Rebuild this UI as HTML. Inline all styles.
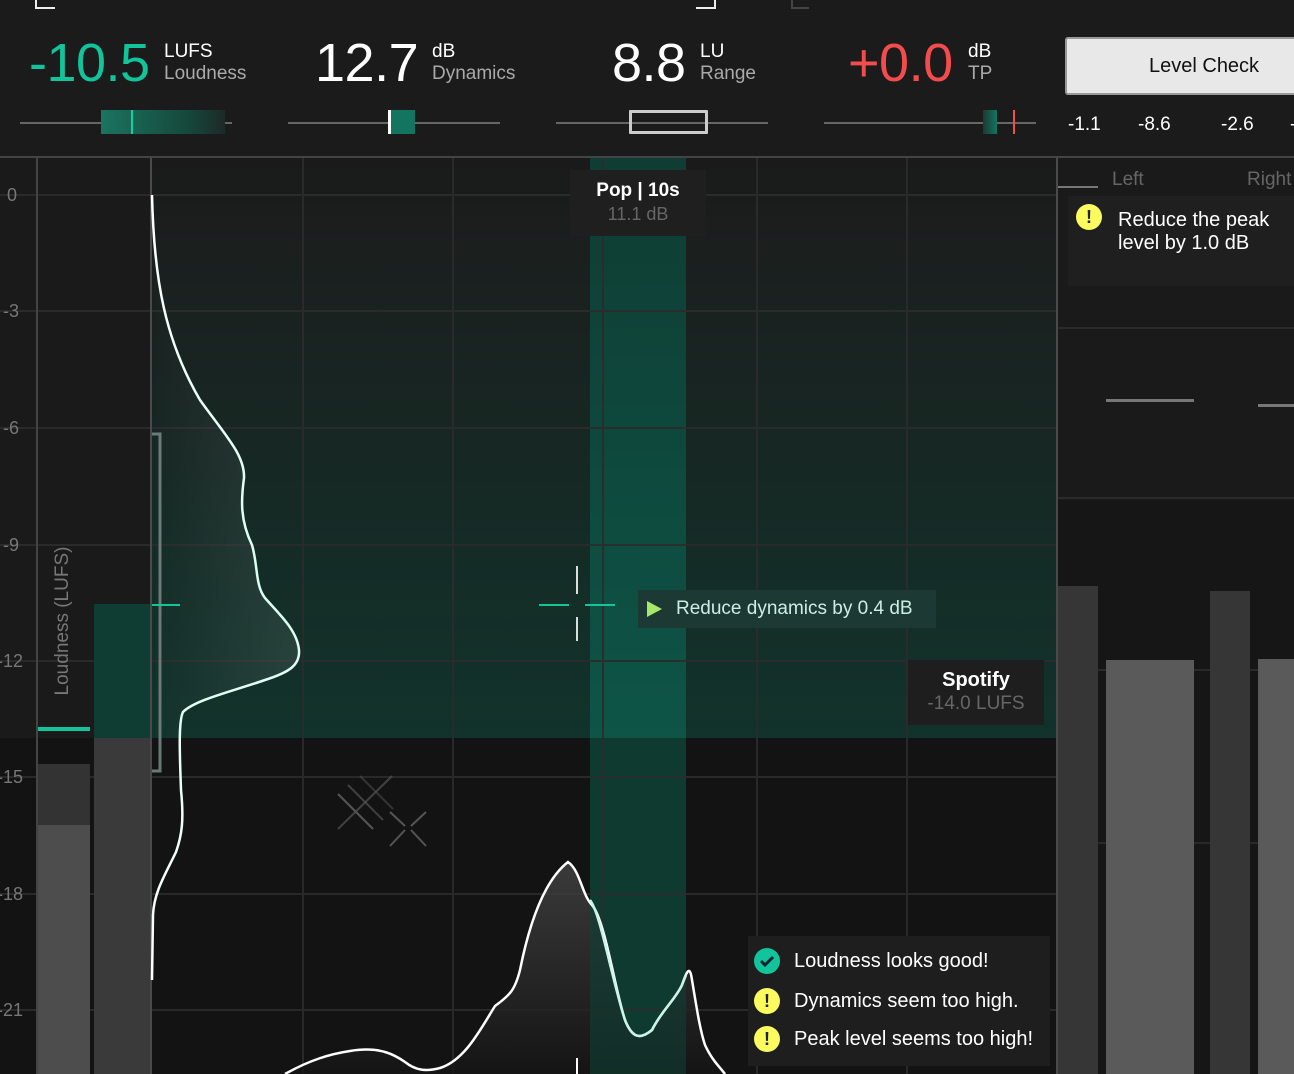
<!DOCTYPE html>
<html><head><meta charset="utf-8"><style>
*{margin:0;padding:0;box-sizing:border-box}
body{width:1294px;height:1074px;overflow:hidden;background:#1b1b1b;font-family:"Liberation Sans",sans-serif;position:relative;color:#fff}
.a{position:absolute}
.big{font-size:54px;line-height:54px;letter-spacing:-0.5px}
.unit{font-size:19px;line-height:22px;color:#fff}
.unit span{color:#aaa}
</style></head><body>
<div class="a" style="left:35px;top:0;width:20px;height:9px;border-left:2px solid #eee;border-bottom:2px solid #eee"></div>
<div class="a" style="left:696px;top:0;width:20px;height:9px;border-right:2px solid #eee;border-bottom:2px solid #eee"></div>
<div class="a" style="left:791px;top:0;width:18px;height:9px;border-left:2px solid #444;border-bottom:2px solid #444"></div>

<div class="a big" style="left:29px;top:36px;color:#12c49b">-10.5</div>
<div class="a unit" style="left:164px;top:41px">LUFS<br><span>Loudness</span></div>
<div class="a big" style="left:315px;top:36px">12.7</div>
<div class="a unit" style="left:432px;top:41px">dB<br><span>Dynamics</span></div>
<div class="a big" style="left:612px;top:36px">8.8</div>
<div class="a unit" style="left:700px;top:41px">LU<br><span>Range</span></div>
<div class="a big" style="left:848px;top:36px;color:#f44c4c">+0.0</div>
<div class="a unit" style="left:968px;top:41px">dB<br><span>TP</span></div>

<div class="a" style="left:1065px;top:37px;width:240px;height:58px;background:#e8e8e8;border:2px solid #999;border-radius:3px;color:#111;font-size:20px;line-height:54px;padding-left:82px">Level Check</div>

<div class="a" style="left:20px;top:122px;width:212px;height:2px;background:#666"></div>
<div class="a" style="left:101px;top:110px;width:124px;height:24px;background:linear-gradient(90deg,#1b7460,#16483c 70%,#1d2a27)"></div>
<div class="a" style="left:131px;top:110px;width:2px;height:24px;background:#14d0a0"></div>
<div class="a" style="left:288px;top:122px;width:212px;height:2px;background:#666"></div>
<div class="a" style="left:391px;top:110px;width:24px;height:24px;background:#137560"></div>
<div class="a" style="left:388px;top:110px;width:3px;height:24px;background:#fff"></div>
<div class="a" style="left:556px;top:122px;width:212px;height:2px;background:#666"></div>
<div class="a" style="left:629px;top:110px;width:79px;height:24px;border:3px solid #ccc;border-radius:1px"></div>
<div class="a" style="left:824px;top:122px;width:212px;height:2px;background:#666"></div>
<div class="a" style="left:983px;top:110px;width:14px;height:24px;background:linear-gradient(90deg,#1b3a32,#137560)"></div>
<div class="a" style="left:1013px;top:110px;width:2px;height:24px;background:#f44c4c"></div>
<div class="a" style="left:1068px;top:114px;font-size:19px">-1.1</div>
<div class="a" style="left:1138px;top:114px;font-size:19px">-8.6</div>
<div class="a" style="left:1221px;top:114px;font-size:19px">-2.6</div>
<div class="a" style="left:1290px;top:114px;font-size:19px">-</div>

<div class="a" style="left:0;top:156px;width:1294px;height:2px;background:#444"></div>

<svg class="a" style="left:0;top:158px" width="1294" height="916" viewBox="0 158 1294 916">
<defs>
<linearGradient id="g1" x1="0" y1="0" x2="0" y2="1"><stop offset="0" stop-color="#1a1a1a"/><stop offset="0.15" stop-color="#1b1f1e"/><stop offset="1" stop-color="#11332b"/></linearGradient>
<linearGradient id="g2" x1="0" y1="0" x2="0" y2="1"><stop offset="0" stop-color="#0f3c33"/><stop offset="1" stop-color="#0e5547"/></linearGradient>
<linearGradient id="g3" x1="0" y1="0" x2="1" y2="0"><stop offset="0" stop-color="#fff" stop-opacity="0"/><stop offset="1" stop-color="#fff" stop-opacity="0.09"/></linearGradient>
<linearGradient id="g4" x1="0" y1="0" x2="0" y2="1"><stop offset="0" stop-color="#444"/><stop offset="1" stop-color="#151515"/></linearGradient>
<linearGradient id="gc" x1="0" y1="0" x2="0" y2="1"><stop offset="0" stop-color="#fff"/><stop offset="0.5" stop-color="#d8fff0"/><stop offset="1" stop-color="#fff"/></linearGradient>
</defs>
<rect x="0" y="158" width="1057" height="916" fill="#131313"/>
<rect x="0" y="158" width="1057" height="580" fill="#1a1a1a"/>
<rect x="151" y="158" width="906" height="580" fill="url(#g1)"/>
<rect x="590" y="158" width="96" height="916" fill="#0f3a30"/>
<rect x="590" y="158" width="96" height="580" fill="url(#g2)"/>
<rect x="1058" y="158" width="236" height="916" fill="#1a1a1a"/>
<rect x="1058" y="500" width="236" height="574" fill="#161616"/>
<g stroke="#2c2c2c" stroke-width="2" opacity="0.9">
<line x1="0" y1="195" x2="1057" y2="195"/><line x1="0" y1="311" x2="1057" y2="311"/><line x1="0" y1="428" x2="1057" y2="428"/><line x1="0" y1="545" x2="1057" y2="545"/><line x1="0" y1="661" x2="1057" y2="661"/><line x1="0" y1="777" x2="1057" y2="777"/><line x1="0" y1="894" x2="1057" y2="894"/><line x1="0" y1="1010" x2="1057" y2="1010"/>
<line x1="303" y1="158" x2="303" y2="1074"/><line x1="453" y1="158" x2="453" y2="1074"/><line x1="603" y1="158" x2="603" y2="1074"/><line x1="757" y1="158" x2="757" y2="1074"/><line x1="907" y1="158" x2="907" y2="1074"/>
<line x1="1058" y1="328" x2="1294" y2="328"/><line x1="1058" y1="498" x2="1294" y2="498"/><line x1="1058" y1="670" x2="1294" y2="670"/><line x1="1058" y1="843" x2="1294" y2="843"/>
</g>
<line x1="37" y1="158" x2="37" y2="1074" stroke="#444" stroke-width="2"/>
<line x1="151" y1="158" x2="151" y2="1074" stroke="#4a4a4a" stroke-width="2"/>
<line x1="1057" y1="158" x2="1057" y2="1074" stroke="#4a4a4a" stroke-width="2"/>
<rect x="38" y="764" width="52" height="310" fill="#333"/>
<rect x="38" y="825" width="52" height="249" fill="#4d4d4d"/>
<rect x="38" y="727" width="52" height="4" fill="#12c49b"/>
<rect x="94" y="604" width="56" height="134" fill="#0f3d34"/>
<rect x="94" y="738" width="56" height="336" fill="#3a3a3a"/>
<path d="M152 434 H160 V771 H152" fill="none" stroke="#6a7a76" stroke-width="3"/>
<line x1="152" y1="605" x2="180" y2="605" stroke="#14c49b" stroke-width="2"/>
<path d="M152 195 C154 280 165 340 200 400 C225 435 245 455 244 478 C241 500 240 520 252 545 C258 565 255 585 265 598 C280 615 297 630 299 650 C300 665 290 672 265 680 C230 692 195 700 183 712 C178 722 180 730 180 740 L180 738 L152 738 Z" fill="url(#g3)"/>
<path d="M152 195 C154 280 165 340 200 400 C225 435 245 455 244 478 C241 500 240 520 252 545 C258 565 255 585 265 598 C280 615 297 630 299 650 C300 665 290 672 265 680 C230 692 195 700 183 712 C178 722 180 760 181 790 C184 820 182 835 176 852 C165 875 154 892 153 915 L152 980" fill="none" stroke="url(#gc)" stroke-width="2.5"/>
<path d="M285 1074 C310 1060 330 1054 350 1051 C380 1046 395 1055 405 1062 C415 1070 425 1072 440 1068 C465 1060 480 1030 495 1006 C510 995 515 990 520 970 C530 920 545 880 568 862 C580 870 582 895 592 905 C605 920 615 990 625 1020 C632 1038 640 1040 652 1030 C662 1010 675 1000 682 985 C687 970 690 965 692 980 C697 1010 700 1030 705 1045 C712 1060 718 1065 725 1074 Z" fill="url(#g4)" opacity="0.8"/>
<path d="M590 1074 L590 900 C600 912 612 980 625 1020 C632 1038 640 1040 652 1030 C662 1010 675 1000 682 985 L686 975 L686 1074Z" fill="#0f3a30" opacity="0.6"/>
<path d="M285 1074 C310 1060 330 1054 350 1051 C380 1046 395 1055 405 1062 C415 1070 425 1072 440 1068 C465 1060 480 1030 495 1006 C510 995 515 990 520 970 C530 920 545 880 568 862 C580 870 582 895 592 905 C605 920 615 990 625 1020 C632 1038 640 1040 652 1030 C662 1010 675 1000 682 985 C687 970 690 965 692 980 C697 1010 700 1030 705 1045 C712 1060 718 1065 725 1074" fill="none" stroke="#fff" stroke-width="2.5"/>
<path d="M590 900 C600 912 612 980 625 1020 C632 1038 640 1040 652 1030 C662 1010 675 1000 682 985 L686 975" fill="none" stroke="#c8f5e6" stroke-width="2.5"/>
<line x1="577" y1="1058" x2="577" y2="1074" stroke="#fff" stroke-width="2"/>
<g stroke-width="2"><line x1="577" y1="566" x2="577" y2="594" stroke="#ddd"/><line x1="577" y1="617" x2="577" y2="641" stroke="#ddd"/><line x1="539" y1="605" x2="569" y2="605" stroke="#14c49b"/><line x1="585" y1="605" x2="615" y2="605" stroke="#14c49b"/></g>
<g stroke="#555" stroke-width="2"><line x1="338" y1="829" x2="392" y2="776" opacity="0.7"/><line x1="338" y1="794" x2="373" y2="829"/><line x1="348" y1="785" x2="383" y2="820" opacity="0.7"/><line x1="360" y1="776" x2="393" y2="809" opacity="0.5"/><line x1="390" y1="812" x2="405" y2="826"/><line x1="411" y1="830" x2="426" y2="846"/><line x1="426" y1="812" x2="411" y2="826"/><line x1="405" y1="830" x2="390" y2="846"/></g>
<rect x="1058" y="586" width="40" height="488" fill="#363636"/>
<rect x="1106" y="660" width="88" height="414" fill="#5a5a5a"/>
<rect x="1210" y="591" width="40" height="483" fill="#363636"/>
<rect x="1258" y="659" width="36" height="415" fill="#5a5a5a"/>
<rect x="1106" y="399" width="88" height="3" fill="#777"/>
<rect x="1258" y="404" width="36" height="3" fill="#777"/>
<rect x="1058" y="186" width="40" height="2" fill="#777"/>
</svg>

<div class="a" style="left:7px;top:185px;font-size:18px;color:#777">0</div>
<div class="a" style="left:3px;top:301px;font-size:18px;color:#777">-3</div>
<div class="a" style="left:3px;top:418px;font-size:18px;color:#777">-6</div>
<div class="a" style="left:3px;top:535px;font-size:18px;color:#777">-9</div>
<div class="a" style="left:-3px;top:651px;font-size:18px;color:#777">-12</div>
<div class="a" style="left:-3px;top:767px;font-size:18px;color:#777">-15</div>
<div class="a" style="left:-3px;top:884px;font-size:18px;color:#777">-18</div>
<div class="a" style="left:-3px;top:1000px;font-size:18px;color:#777">-21</div>
<div class="a" style="left:-17px;top:610px;width:160px;font-size:19px;color:#777;transform:rotate(-90deg);text-align:center">Loudness (LUFS)</div>

<div class="a" style="left:570px;top:170px;width:136px;height:66px;background:#1f1f1f;text-align:center;padding-top:10px"><div style="font-size:19px;font-weight:bold">Pop | 10s</div><div style="font-size:18px;color:#666;margin-top:2px">11.1 dB</div></div>
<div class="a" style="left:638px;top:590px;width:298px;height:38px;background:#1c3a33"></div>
<div class="a" style="left:647px;top:601px;width:0;height:0;border-left:15px solid #a5e86a;border-top:8px solid transparent;border-bottom:8px solid transparent"></div>
<div class="a" style="left:676px;top:598px;font-size:19px;color:#cdeee2">Reduce dynamics by 0.4 dB</div>
<div class="a" style="left:908px;top:660px;width:136px;height:65px;background:#1e1e1e;text-align:center;padding-top:9px"><div style="font-size:20px;font-weight:bold">Spotify</div><div style="font-size:19px;color:#666;margin-top:1px">-14.0 LUFS</div></div>

<div class="a" style="left:748px;top:936px;width:302px;height:130px;background:#1e1e1e"></div>
<div class="a" style="left:754px;top:948px;width:26px;height:26px;border-radius:50%;background:#12c49b"></div>
<svg class="a" style="left:754px;top:948px" width="26" height="26"><path d="M7 13 L11 17 L19 9" fill="none" stroke="#123" stroke-width="3"/></svg>
<div class="a" style="left:794px;top:950px;font-size:20px">Loudness looks good!</div>
<div class="a" style="left:754px;top:988px;width:26px;height:26px;border-radius:50%;background:#fbfb60;color:#222;font-weight:bold;text-align:center;font-size:18px;line-height:26px">!</div>
<div class="a" style="left:794px;top:990px;font-size:20px">Dynamics seem too high.</div>
<div class="a" style="left:754px;top:1026px;width:26px;height:26px;border-radius:50%;background:#fbfb60;color:#222;font-weight:bold;text-align:center;font-size:18px;line-height:26px">!</div>
<div class="a" style="left:794px;top:1028px;font-size:20px">Peak level seems too high!</div>

<div class="a" style="left:1112px;top:169px;font-size:19px;color:#666">Left</div>
<div class="a" style="left:1247px;top:169px;font-size:19px;color:#666">Right</div>
<div class="a" style="left:1068px;top:196px;width:230px;height:90px;background:#1f1f1f"></div>
<div class="a" style="left:1076px;top:204px;width:26px;height:26px;border-radius:50%;background:#fbfb60;color:#222;font-weight:bold;text-align:center;font-size:18px;line-height:26px">!</div>
<div class="a" style="left:1118px;top:209px;font-size:20px;line-height:23px">Reduce the peak<br>level by 1.0 dB</div>
</body></html>
